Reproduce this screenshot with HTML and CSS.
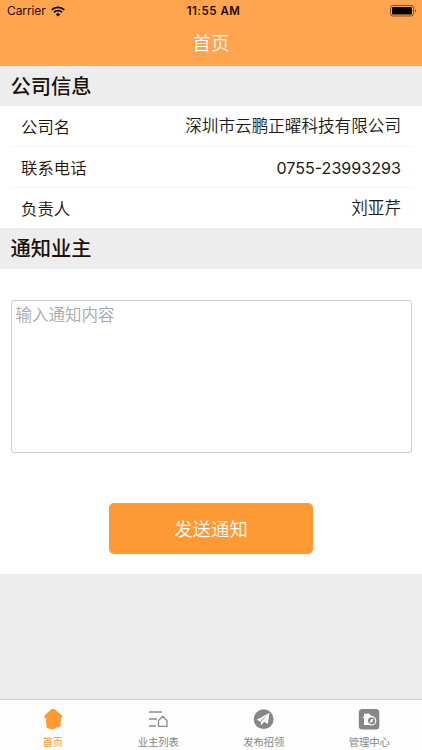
FILE: index.html
```
<!doctype html>
<html lang="zh-cn">
<head>
    <meta charset="utf-8">
    <meta name="viewport" content="width=device-width, initial-scale=1, maximum-scale=1, user-scalable=no" />
    <meta name="format-detection" content="telephone=no" />
    <link rel="stylesheet" href="styles.css">
    <title>首页</title>
</head>
<body>
    <header class="header">
        <div class="status">
            <div class="carrier">
                <span>Carrier</span>
                <svg class="wifi" viewBox="0 0 14 11" width="14" height="11">
                    <path d="M.7 3.900a9 9 0 0 1 12.600 0M3 6.300a5.700 5.700 0 0 1 8 0" fill="none" stroke="#000" stroke-width="1.900"/>
                    <path d="M4.800 8.200a3.200 3.200 0 0 1 4.400 0L7 10.500z"/>
                </svg>
            </div>
            <span class="time">11:55 AM</span>
            <div class="battery">
                <svg viewBox="0 0 27 12" width="27" height="12">
                    <rect x=".5" y=".5" width="23" height="10.500" rx="2.400" fill="none" stroke="#000" stroke-opacity=".5"/>
                    <rect x="2" y="2" width="20" height="7.500" rx="1"/>
                    <path d="M25 4v3.600q1.200-.5 1.200-1.800T25 4z" fill-opacity=".5"/>
                </svg>
            </div>
        </div>
        <h1 class="title">首页</h1>
    </header>

    <main class="content">
        <h2 class="section">公司信息</h2>
        <ul class="list">
            <li><span>公司名</span><span class="value">深圳市云鹏正曜科技有限公司</span></li>
            <li><span>联系电话</span><span class="value phone">0755-23993293</span></li>
            <li><span>负责人</span><span class="value">刘亚芹</span></li>
        </ul>
        <h2 class="section">通知业主</h2>
        <div class="notice">
            <textarea class="message" placeholder="输入通知内容"></textarea>
            <button class="send" type="button">发送通知</button>
        </div>
    </main>

    <nav class="tabbar">
        <a class="tab active">
            <svg viewBox="0 0 22 22" width="22" height="22">
                <path d="M9.300 1.300q1.700-1.100 3.200 0l6.900 5.600q1.600 1.500.6 2.500l-.9.400-.6 8q-.2 1.600-1.700 1.600h-2.300l-2.500 1.500q-1 .6-2.200.3l-3.600-.7q-1.500-.3-1.700-1.800l-.7-8.400-1.200-.7q-1.300-.9.200-2.300z" fill="#ff9933"/>
            </svg>
            <span>首页</span>
        </a>
        <a class="tab">
            <svg viewBox="0 0 22 22" width="22" height="22" fill="none" stroke="#8b8b8b" stroke-width="1.300">
                <path d="M2 4h13M2 11h8M2 18h7M11.500 18.300v-5.800l4.200-4.300 4.200 4.300v5.800z"/>
            </svg>
            <span>业主列表</span>
        </a>
        <a class="tab">
            <svg viewBox="0 0 22 22" width="22" height="22">
                <circle cx="10.700" cy="11.200" r="9.900" fill="#868686"/>
                <path d="M16.500 4.700L3.700 11.800l3.400 1.600zM16.500 4.700l-8.700 9.400v3.500l2.300-2.700zM16.500 4.700l-5.900 8.700 4.300 2.500z" fill="#fff"/>
            </svg>
            <span>发布招领</span>
        </a>
        <a class="tab">
            <svg viewBox="0 0 22 22" width="22" height="22">
                <rect x=".8" y="1" width="20.500" height="20.500" rx="3.500" fill="#868686"/>
                <path d="M4.300 9.800L6 8.300V5.500h1.800v1.300L10 5l5.800 4.400-2 7.600H6V9.800z" fill="#fff"/>
                <circle cx="13.600" cy="12.800" r="4.200" fill="#868686" stroke="#fff" stroke-width="1.200"/>
                <path d="M15.600 10.600l-1.300 3.300-2.700 1.100 1.200-3.300z" fill="#fff"/>
            </svg>
            <span>管理中心</span>
        </a>
    </nav>
</body>
</html>
```
FILE: styles.css
```
html, body {
    height: 100%;
}
body {
    margin: 0;
    display: flex;
    flex-direction: column;
    background: #ededed;
    color: #1d1009;
    font-family: "Liberation Sans", "Noto Sans CJK SC", sans-serif;
    overflow: hidden;
}
.header {
    height: 66px;
    background: #ffa550;
}
.status {
    display: flex;
    align-items: center;
    height: 22px;
    padding: 0 5px 0 7px;
    font: 12px/22px Inter, sans-serif;
    color: #1b0d00;
}
.carrier, .battery {
    flex: 1;
    display: flex;
    align-items: center;
}
.carrier {
    gap: 5px;
    letter-spacing: -.1px;
}
.battery {
    justify-content: flex-end;
}
.time {
    padding-left: 3px;
    font-weight: 600;
    font-size: 11.500px;
    letter-spacing: .5px;
}
.title {
    margin: 0;
    font-size: 18.400px;
    font-weight: 350;
    line-height: 43px;
    text-align: center;
    color: #fff;
}
.section {
    margin: 0;
    padding-left: 10.500px;
    height: 40.300px;
    font-size: 20.300px;
    font-weight: 500;
    line-height: 42px;
}
.list {
    margin: 0;
    padding: 0 10px;
    list-style: none;
    background: #fff;
}
.list li {
    display: flex;
    justify-content: space-between;
    box-sizing: border-box;
    height: 40.700px;
    padding: 0 11px;
    border-bottom: 1px solid #f6f6f6;
    font-size: 16.400px;
    font-weight: 350;
    line-height: 42px;
}
.list li:last-child {
    border-bottom: 0;
}
.list .value {
    font-size: 16.600px;
    color: #1a1a1a;
}
.list .phone {
    font-family: Inter, sans-serif;
    font-size: 16.100px;
    font-weight: 400;
}
.notice {
    display: flex;
    flex-direction: column;
    align-items: center;
    box-sizing: border-box;
    height: 305.800px;
    padding-top: 31px;
    background: #fff;
}
.message {
    box-sizing: border-box;
    width: 401px;
    height: 153px;
    margin: 0;
    padding: 2px 4px;
    border: 1px solid #ccc;
    border-radius: 3px;
    background: #fff;
    font: 350 16.500px/24px "Liberation Sans", "Noto Sans CJK SC", sans-serif;
    resize: none;
}
.message::placeholder {
    color: #a9a9a9;
}
.send {
    width: 204px;
    height: 51px;
    margin-top: 50px;
    padding: 0;
    border: 0;
    border-radius: 5px;
    background: #ff9933;
    color: #fff;
    font: 350 18.400px/51px "Noto Sans CJK SC", sans-serif;
}
.tabbar {
    display: flex;
    box-sizing: border-box;
    height: 51px;
    margin-top: auto;
    border-top: 1px solid #cfcfcf;
    background: #fdfdfd;
}
.tab {
    flex: 1;
    display: flex;
    flex-direction: column;
    align-items: center;
    padding-top: 8px;
    font-size: 10.300px;
    line-height: 16px;
    color: #858585;
}
.tab svg {
    flex-shrink: 0;
}
.tab span {
    margin-top: 5px;
}
.active {
    color: #ff9933;
}
```
